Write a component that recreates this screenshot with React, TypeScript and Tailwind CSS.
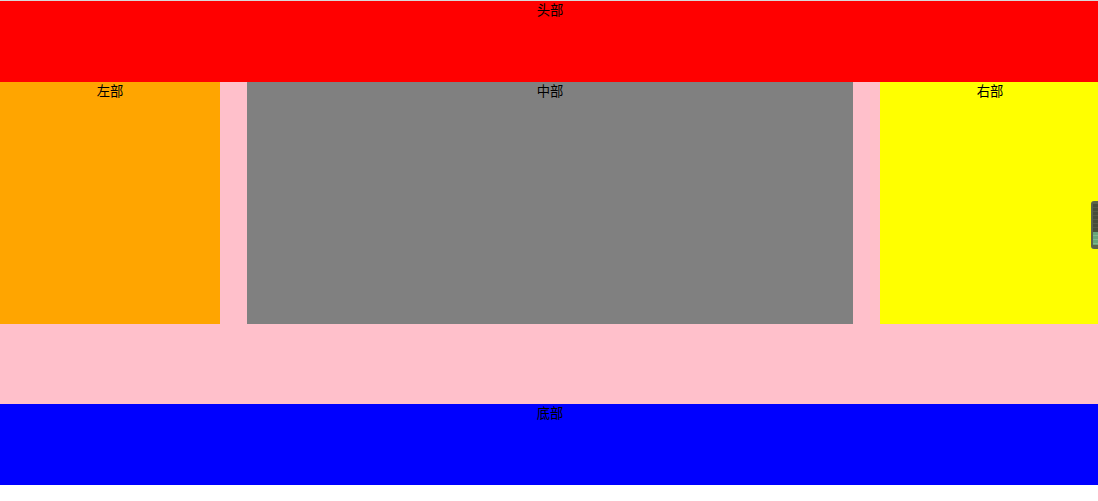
// little thumbnail that sticks out on the right edge of the page
function EdgeWidget() {
  return (
    <svg className="fixed right-0 top-[201px]" width="7" height="48" viewBox="0 0 7 48">
      <path d="M7 0H3a3 3 0 0 0-3 3v42a3 3 0 0 0 3 3h4z" fill="#5c6448" />
      <rect x="2" y="3" width="5" height="28" fill="#474d3a" />
      {[6, 10, 14, 18, 22, 26].map((y) => (
        <rect key={y} x="2" y={y} width="5" height="1" fill="#555b46" />
      ))}
      <rect x="2" y="31" width="5" height="13" fill="#67a578" />
      {[34, 38, 42].map((y) => (
        <rect key={y} x="2" y={y} width="5" height="1" fill="#7db88c" />
      ))}
    </svg>
  );
}

export default function App() {
  return (
    <div className="min-h-[501px] overflow-hidden bg-white text-center text-[13.33px] leading-[20px] text-black font-['Liberation_Sans','Noto_Sans_CJK_SC',sans-serif]">
      <div className="h-px bg-[#d8d8d8]" />
      <header className="h-[81px] bg-[#ff0000] pl-[2px]">头部</header>
      <div className="flex h-[322px] items-start overflow-hidden bg-[#ffc0cb]">
        <div className="h-[242px] w-[220px] shrink-0 bg-[#ffa500]">左部</div>
        <div className="ml-[27px] h-[242px] w-[606px] shrink-0 bg-[#808080]">中部</div>
        <div className="ml-[27px] h-[242px] w-[220px] shrink-0 bg-[#ffff00]">右部</div>
      </div>
      <footer className="h-[81px] bg-[#0000ff] pl-[2px]">底部</footer>
      <EdgeWidget />
    </div>
  );
}
